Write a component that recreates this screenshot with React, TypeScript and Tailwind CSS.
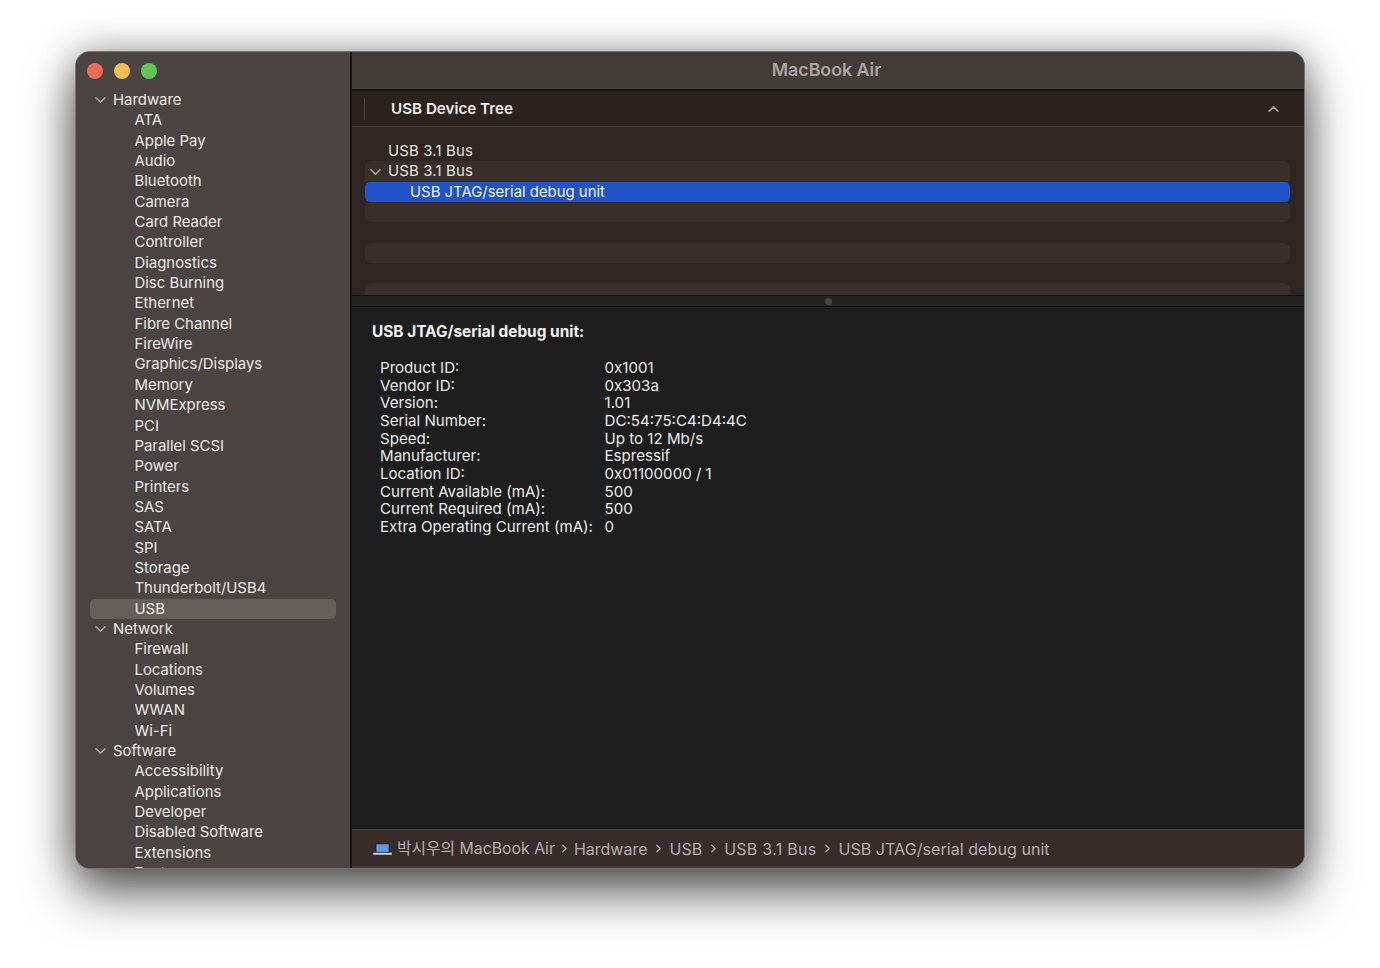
import React from "react";

const font = { fontFamily: 'Inter, "Noto Sans CJK KR", "Liberation Sans", sans-serif' };

const hardware = ["ATA","Apple Pay","Audio","Bluetooth","Camera","Card Reader","Controller","Diagnostics","Disc Burning","Ethernet","Fibre Channel","FireWire","Graphics/Displays","Memory","NVMExpress","PCI","Parallel SCSI","Power","Printers","SAS","SATA","SPI","Storage","Thunderbolt/USB4","USB"];
const network = ["Firewall","Locations","Volumes","WWAN","Wi-Fi"];
const software = ["Accessibility","Applications","Developer","Disabled Software","Extensions","Fonts"];

const details: [string, string][] = [
  ["Product ID:", "0x1001"],
  ["Vendor ID:", "0x303a"],
  ["Version:", "1.01"],
  ["Serial Number:", "DC:54:75:C4:D4:4C"],
  ["Speed:", "Up to 12 Mb/s"],
  ["Manufacturer:", "Espressif"],
  ["Location ID:", "0x01100000 / 1"],
  ["Current Available (mA):", "500"],
  ["Current Required (mA):", "500"],
  ["Extra Operating Current (mA):", "0"],
];

function Chevron({ className }: { className: string }) {
  return (
    <svg viewBox="0 0 12 8" className={className} fill="none" stroke="currentColor" strokeWidth="1.8" strokeLinecap="round" strokeLinejoin="round">
      <path d="M1.2 1.6 6 6.4l4.8-4.8" />
    </svg>
  );
}

function Group({ title, items }: { title: string; items: string[] }) {
  return (
    <>
      <div className="flex h-[20.35px] shrink-0 items-center pl-[19px] text-[14.9px] text-[#ece9e7]">
        <Chevron className="mr-[7px] h-[8px] w-[11px] text-[#a39e9a]" />
        {title}
      </div>
      {items.map((i) => (
        <div
          key={i}
          className={`mx-[14px] flex h-[20.35px] shrink-0 items-center rounded-[5px] pl-[44.5px] text-[14.9px] text-[#ece9e7] ${i === "USB" ? "bg-[#655f5b]" : ""}`}
        >
          {i}
        </div>
      ))}
    </>
  );
}

function Sep({ className }: { className: string }) {
  return (
    <svg viewBox="0 0 6 10" className={className} fill="none" stroke="currentColor" strokeWidth="1.5" strokeLinecap="round" strokeLinejoin="round">
      <path d="M1 1l4 4-4 4" />
    </svg>
  );
}

export default function App() {
  const wide = "ml-[9px] mr-[8px] h-[9px] w-[5px] text-[#b5aeaa]";
  return (
    <div className="h-[968px] w-[1380px] overflow-hidden bg-white pl-[75px] pt-[51px]" style={font}>
      <div className="flex h-[818px] w-[1230px] overflow-hidden rounded-[15px] border border-[#77726f] bg-[#1e1e1e] shadow-[0_24px_50px_rgba(0,0,0,0.62),0_0_36px_rgba(0,0,0,0.3)]">
        <aside className="flex w-[276px] shrink-0 flex-col overflow-hidden border-r-2 border-[#181614] bg-[#4a4542]">
          <div className="flex h-[38px] shrink-0 items-center gap-[11px] pl-[11px]">
            <span className="h-[16px] w-[16px] rounded-full bg-[#ee6a5f]" />
            <span className="h-[16px] w-[16px] rounded-full bg-[#f5bd4f]" />
            <span className="h-[16px] w-[16px] rounded-full bg-[#61c454]" />
          </div>
          <Group title="Hardware" items={hardware} />
          <Group title="Network" items={network} />
          <Group title="Software" items={software} />
        </aside>
        <main className="flex min-w-0 flex-1 flex-col">
          <header className="flex h-[39px] shrink-0 items-center justify-center border-b-2 border-[#191715] bg-[#433d3a] pr-[3px] text-[17.8px] font-semibold text-[#a9a4a0]">
            MacBook Air
          </header>
          <div className="flex h-[36px] shrink-0 items-center border-b border-[#4a423e] bg-[#2c231f]">
            <span className="ml-[12px] h-[22px] w-px bg-[#4a423e]" />
            <span className="ml-[26px] mt-[2px] text-[15.2px] font-semibold text-[#f0eeec]">USB Device Tree</span>
            <svg viewBox="0 0 12 8" className="ml-auto mr-[25px] h-[8px] w-[11px] text-[#a39e9a]" fill="none" stroke="currentColor" strokeWidth="1.8" strokeLinecap="round" strokeLinejoin="round">
              <path d="M1.2 6.4 6 1.6l4.8 4.8" />
            </svg>
          </div>
          <div className="flex h-[168px] shrink-0 flex-col overflow-hidden bg-[#2f2522] pl-[13px] pr-[14px] pt-[14px] text-[14.9px] text-[#e6e3e0]">
            <div className="flex h-[20.35px] shrink-0 items-center pl-[23px] tracking-[0.18px]">USB 3.1 Bus</div>
            <div className="flex h-[20.35px] shrink-0 items-center rounded-t-[6px] bg-[#392e2b] pl-[5px]">
              <Chevron className="mr-[7px] h-[8px] w-[11px] text-[#a39e9a]" />
              <span className="tracking-[0.18px]">USB 3.1 Bus</span>
            </div>
            <div className="flex h-[20.35px] shrink-0 items-center rounded-[5px] bg-[#2053c8] pl-[45px] text-[#eef2fb]">USB JTAG/serial debug unit</div>
            <div className="h-[20.35px] shrink-0 rounded-[6px] bg-[#392e2b]" />
            <div className="h-[20.35px] shrink-0" />
            <div className="h-[20.35px] shrink-0 rounded-[6px] bg-[#392e2b]" />
            <div className="h-[20.35px] shrink-0" />
            <div className="h-[20.35px] shrink-0 rounded-[6px] bg-[#392e2b]" />
          </div>
          <div className="flex h-[12px] shrink-0 items-center justify-center border-y border-[#131313] bg-[#242424]">
            <span className="h-[7px] w-[7px] rounded-full bg-[#474747]" />
          </div>
          <section className="min-h-0 flex-1 bg-[#1e1e1e] pl-[20px] pt-[15px] text-[15.1px] text-[#ebebeb]">
            <h2 className="h-[20px] text-[15.4px] font-bold leading-[20px] text-[#f2f2f2]">USB JTAG/serial debug unit:</h2>
            <div className="mt-[17px] grid grid-cols-[224.5px_1fr] pl-[8px]">
              {details.map(([k, v]) => (
                <React.Fragment key={k}>
                  <div className="h-[17.67px] leading-[17.67px]">{k}</div>
                  <div className="h-[17.67px] leading-[17.67px]">{v}</div>
                </React.Fragment>
              ))}
            </div>
          </section>
          <footer className="flex h-[39px] shrink-0 items-center border-y-2 border-[#443a36] bg-[#382d2a] pl-[21px] text-[16px] leading-[20px] text-[#b5aeaa]">
            <svg viewBox="0 0 20 14" className="mr-[5px] h-[14px] w-[19px]">
              <rect x="2.5" y="1" width="15" height="10" rx="1" fill="#1d2430" />
              <rect x="3.5" y="2" width="13" height="8" fill="#5b9be0" />
              <rect x="0" y="11" width="20" height="2" rx="0.8" fill="#d2d2d2" />
            </svg>
            <span className="text-[15.8px]">박시우의 MacBook Air</span>
            <Sep className="ml-[7px] mr-[7px] h-[9px] w-[5px] text-[#b5aeaa]" />
            <span>Hardware</span>
            <Sep className={wide} />
            <span>USB</span>
            <Sep className={wide} />
            <span className="tracking-[0.27px]">USB 3.1 Bus</span>
            <Sep className={wide} />
            <span className="text-[16.15px]">USB JTAG/serial debug unit</span>
          </footer>
        </main>
      </div>
    </div>
  );
}
